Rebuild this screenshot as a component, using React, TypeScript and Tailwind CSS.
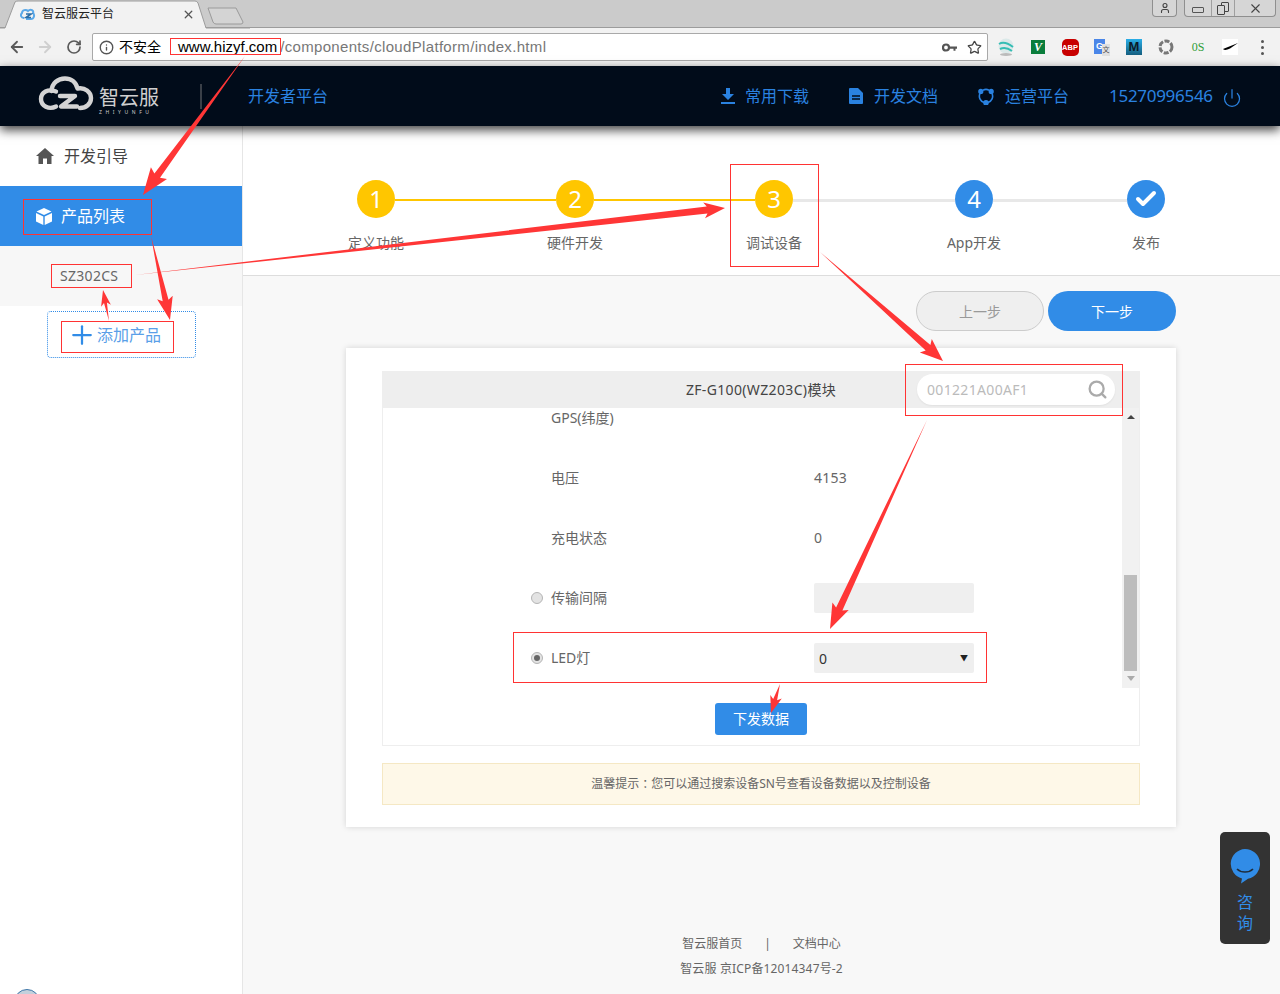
import React from "react";
import { ArrowLeft, ArrowRight, RotateCw, Info, Star, Plus, Search, Power, Check, User, X, Minus } from "lucide-react";

const FONT = { fontFamily: '"Noto Sans","Noto Sans CJK SC",sans-serif' };

function Arrow({ x1, y1, x2, y2, w = 5, head = 9, headLen = 22 }: { x1: number; y1: number; x2: number; y2: number; w?: number; head?: number; headLen?: number }) {
  const dx = x2 - x1, dy = y2 - y1, L = Math.hypot(dx, dy);
  const ux = dx / L, uy = dy / L, nx = -uy, ny = ux;
  const bx = x2 - ux * headLen, by = y2 - uy * headLen;
  const p = (x: number, y: number) => `${x.toFixed(1)},${y.toFixed(1)}`;
  const pts = [
    p(x1, y1),
    p(bx + (nx * w) / 2, by + (ny * w) / 2),
    p(bx + nx * head - ux * 3, by + ny * head - uy * 3),
    p(x2, y2),
    p(bx - nx * head - ux * 3, by - ny * head - uy * 3),
    p(bx - (nx * w) / 2, by - (ny * w) / 2),
  ].join(" ");
  return <polygon points={pts} fill="#ff3636" />;
}

function RedBox({ cls }: { cls: string }) {
  return <div className={`absolute z-20 border border-[#f33] pointer-events-none ${cls}`} />;
}

function Logo() {
  return (
    <svg className="-mt-[2px] block" width="56" height="38" viewBox="0 0 56 38" fill="none" stroke="#d4d4d4" strokeWidth="4.4" strokeLinecap="round" strokeLinejoin="round">
      <path d="M13.5 15 C14 7 20 2.5 27 2.5 C33 2.5 38 6 39.5 12.5 C47 11 53 16 53 22 C53 28 48 32 42 32" />
      <path d="M18 15.5 C10 12.5 3 16 3 23 C3 30 11 34 18 30.5" />
      <path d="M22 20 H37 L23 30.5 H39" />
    </svg>
  );
}

function Ext({ children }: { children: React.ReactNode }) {
  return <div className="w-[32px] flex items-center justify-center">{children}</div>;
}

function Toolbar() {
  return (
    <div className="h-[38px] bg-[#f2f2f2] flex items-center">
      <div className="w-[92px] flex items-center pl-[8px] gap-[10px]">
        <ArrowLeft size={18} strokeWidth={2.4} color="#5a5a5a" />
        <ArrowRight size={18} strokeWidth={2.4} color="#cfcfcf" />
        <RotateCw size={16} strokeWidth={2.6} color="#5a5a5a" className="ml-[2px]" />
      </div>
      <div className="w-[896px] h-[28px] bg-white border border-[#a9a9a9] rounded-[2px] flex items-center pl-[6px] pr-[5px] text-[15px]" style={{ fontFamily: '"Liberation Sans","Noto Sans CJK SC",sans-serif' }}>
        <Info size={15} strokeWidth={2.2} color="#555" />
        <span className="ml-[5px] text-[14px] text-black w-[59px]">不安全</span>
        <span className="text-black">www.hizyf.com</span>
        <span className="text-[#777] ml-[3px] tracking-[0.33px]">/components/cloudPlatform/index.html</span>
        <svg className="ml-auto mr-[10px]" width="15" height="9" viewBox="0 0 15 9"><circle cx="4" cy="4.5" r="3" fill="none" stroke="#555" strokeWidth="2.2" /><path d="M7 3.5h8v2.2h-1.5v2h-2v-2H7z" fill="#555" /></svg>
        <Star size={15} strokeWidth={2} color="#444" />
      </div>
      <div className="flex items-center ml-[2px]">
        <Ext><svg width="16" height="18" viewBox="0 0 16 18"><circle cx="8" cy="8" r="7.5" fill="#dbe9e9" /><path d="M1 6c5-3 10 0 14 3M2 11c4-2 8-1 12 2" stroke="#35bdb4" strokeWidth="2" fill="none" /><ellipse cx="8" cy="16.5" rx="6" ry="1.5" fill="#bbb" /></svg></Ext>
        <Ext><div className="w-[14px] h-[14px] bg-[#0a7d3c] text-white text-[12px] font-bold italic leading-[14px] text-center" style={{ fontFamily: '"Liberation Serif",serif' }}>V</div></Ext>
        <Ext><div className="w-[17px] h-[17px] rounded-[5px] bg-[#c80000] text-white text-[7.5px] font-bold leading-[17px] text-center" style={{ fontFamily: '"Liberation Sans",sans-serif' }}>ABP</div></Ext>
        <Ext><div className="relative w-[16px] h-[17px]"><div className="w-[11px] h-[15px] bg-[#4a86e8] text-white text-[9px] font-bold leading-[14px] text-center" style={{ fontFamily: '"Liberation Sans",sans-serif' }}>G</div><div className="absolute right-0 bottom-0 w-[8px] h-[12px] bg-[#e0e0e0] text-[#555] text-[7px] leading-[12px] text-center">文</div></div></Ext>
        <Ext><div className="w-[16px] h-[16px] bg-gradient-to-b from-[#2aaee8] to-[#155f80] text-[#0b1b2a] text-[13px] font-bold leading-[16px] text-center" style={{ fontFamily: '"Liberation Sans",sans-serif' }}>M</div></Ext>
        <Ext><svg width="16" height="16" viewBox="0 0 16 16" fill="none"><circle cx="8" cy="8" r="6" stroke="#777" strokeWidth="3" strokeDasharray="5 1.5" /></svg></Ext>
        <Ext><span className="text-[#2f9e3a] text-[12px] leading-[16px]" style={{ fontFamily: '"Liberation Serif",serif' }}>0S</span></Ext>
        <Ext><div className="w-[16px] h-[16px] bg-white flex items-center justify-center"><svg width="15" height="8" viewBox="0 0 15 8"><path d="M0 6 L15 0 L7 5.5 Q2 8 0 6z" fill="#000" /></svg></div></Ext>
        <Ext><div className="flex flex-col gap-[3px]"><i className="block w-[3px] h-[3px] rounded-full bg-[#555]" /><i className="block w-[3px] h-[3px] rounded-full bg-[#555]" /><i className="block w-[3px] h-[3px] rounded-full bg-[#555]" /></div></Ext>
      </div>
    </div>
  );
}

function TabStrip() {
  return (
    <div className="h-[28px] bg-[#cbcbcb] flex items-start relative border-b border-[#9c9c9c]">
      <svg className="absolute left-0 top-0" width="250" height="29" viewBox="0 0 250 29">
        <path d="M0 28 L5 28 L15 2 Q16 1 18 1 L195 1 Q197 1 198 3 L206 28 L250 28" fill="#f2f2f2" stroke="#9c9c9c" />
        <path d="M208 8 L236 8 L243 22 Q243 24 241 24 L216 24 Q214 24 213 22 Z" fill="#d4d4d4" stroke="#9a9a9a" />
      </svg>
      <div className="relative flex items-center h-[28px] ml-[20px] w-[175px] text-[12px] text-[#222]" style={FONT}>
        <svg width="16" height="14" viewBox="0 0 16 14" fill="none" stroke="#5aa8e8" strokeWidth="2"><path d="M4 11C1 11 0 8 2 6 2 3 6 2 8 4 11 1 14 4 13 6 15 8 14 12 11 12H6" /><path d="M6 7h5L6 10.5h5" stroke="#2a6ea8" strokeWidth="1.6" /></svg>
        <span className="ml-[6px]">智云服云平台</span>
        <X size={13} strokeWidth={2.4} color="#555" className="ml-auto" />
      </div>
      <div className="absolute left-[1152px] top-0 w-[25px] h-[17px] bg-[#d6d6d6] border border-t-0 border-[#8f8f8f] rounded-b-[4px] flex items-center justify-center"><User size={12} strokeWidth={2.2} color="#444" /></div>
      <div className="absolute left-[1184px] top-0 w-[92px] h-[17px] bg-[#d6d6d6] border border-t-0 border-[#8f8f8f] rounded-b-[4px] flex items-center text-[#444]">
        <div className="w-[26px] flex justify-center"><div className="w-[12px] h-[6px] mt-[3px] border border-[#555] rounded-[1px]" /></div>
        <div className="w-[24px] h-full border-x border-[#9f9f9f] flex items-center justify-center">
          <div className="relative w-[12px] h-[13px]">
            <div className="absolute right-0 top-0 w-[8px] h-[10px] border border-[#444] rounded-[1px]" />
            <div className="absolute left-0 bottom-0 w-[8px] h-[10px] border border-[#444] rounded-[1px] bg-[#d6d6d6]" />
          </div>
        </div>
        <div className="flex-1 flex justify-center"><X size={15} strokeWidth={1.8} /></div>
      </div>
    </div>
  );
}

function NavItem({ icon, label, cls }: { icon: React.ReactNode; label: string; cls: string }) {
  return (
    <div className={`flex items-center ${cls}`}>
      {icon}
      <span>{label}</span>
    </div>
  );
}

function Header() {
  return (
    <div className="relative z-10 h-[60px] bg-[#010c1a] flex items-center text-[16px] text-[#2a82e0] shadow-[0_4px_10px_rgba(0,0,0,0.75)]">
      <div className="ml-[38px] w-[56px]"><Logo /></div>
      <div className="ml-[5px] pt-[10px] flex flex-col items-start w-[61px]">
        <span className="text-[20px] leading-[21px] text-[#cfcfcf]">智云服</span>
        <span className="mt-[1px] text-[5px] leading-[6px] tracking-[3.6px] text-[#cfcfcf]">ZHIYUNFU</span>
      </div>
      <div className="ml-[40px] w-[2px] h-[25px] bg-[#3a4048]" />
      <span className="ml-[46px]">开发者平台</span>
      <NavItem cls="ml-[393px]" label="常用下载" icon={<svg className="mr-[10px]" width="14" height="16" viewBox="0 0 14 16" fill="#2a82e0"><path d="M5 0h4v6h4L7 12 1 6h4z" /><rect x="0" y="14" width="14" height="2" /></svg>} />
      <NavItem cls="ml-[40px]" label="开发文档" icon={<svg className="mr-[11px]" width="14" height="16" viewBox="0 0 14 16"><path d="M1 0h8l5 5v10a1 1 0 0 1-1 1H1a1 1 0 0 1-1-1V1a1 1 0 0 1 1-1z" fill="#2a82e0" /><path d="M3 8h8M3 11h8" stroke="#010c1a" strokeWidth="1.6" /></svg>} />
      <NavItem cls="ml-[40px]" label="运营平台" icon={<svg className="mr-[11px]" width="16" height="17" viewBox="0 0 16 17" fill="none" stroke="#2a82e0" strokeWidth="1.6"><path d="M2 5.5a6.5 6.5 0 0 0 4 9M14 5.5a6.5 6.5 0 0 1-4 9M5 2.2a6.5 6.5 0 0 1 6 0" /><circle cx="2.8" cy="3.4" r="1.8" fill="#2a82e0" /><circle cx="13.2" cy="3.4" r="1.8" fill="#2a82e0" /><circle cx="8" cy="14.8" r="2" fill="#2a82e0" /></svg>} />
      <span className="ml-[40px] text-[17px] tracking-[-0.3px]">15270996546</span>
      <Power size={20} strokeWidth={1.5} className="ml-[9px] mt-[3px]" />
    </div>
  );
}

function Sidebar() {
  return (
    <div className="w-[243px] shrink-0 bg-white border-r border-[#e6e6e6] text-[16px]">
      <div className="h-[60px] flex items-center pl-[36px] text-[#444]">
        <svg width="18" height="16" viewBox="0 0 18 16" fill="#555"><path d="M9 0 L18 8 L15.5 8 L15.5 16 L11 16 L11 10.5 L7 10.5 L7 16 L2.5 16 L2.5 8 L0 8 Z" /></svg>
        <span className="ml-[10px]">开发引导</span>
      </div>
      <div className="h-[60px] flex items-center pl-[36px] bg-[#318ce7] text-white">
        <svg width="16" height="17" viewBox="0 0 16 17" fill="#fff"><path d="M8 0 L15.5 3.5 L8 7 L0.5 3.5Z" /><path d="M0 5 L7.3 8.4 V17 L0 13.5Z" /><path d="M16 5 L8.7 8.4 V17 L16 13.5Z" /></svg>
        <span className="ml-[9px]">产品列表</span>
      </div>
      <div className="h-[60px] flex items-center pl-[60px] pb-[2px] bg-[#f7f7f7] text-[14px] text-[#666] tracking-[0.3px]">SZ302CS</div>
      <div className="ml-[47px] mt-[5px] w-[149px] h-[47px] border border-dotted border-[#318ce7] rounded-[4px] flex items-center pl-[19px] text-[#5a9fe8]">
        <Plus size={30} strokeWidth={1.8} color="#318ce7" />
        <span>添加产品</span>
      </div>
    </div>
  );
}

function Circle({ bg, children }: { bg: string; children: React.ReactNode }) {
  return <div className={`w-[38px] h-[38px] shrink-0 rounded-full flex items-center justify-center text-white text-[24px] ${bg}`}>{children}</div>;
}

function Steps() {
  return (
    <div className="h-[150px] bg-white border-b border-[#ddd]">
      <div className="pt-[54px] pl-[114px] flex items-center">
        <Circle bg="bg-[#ffc600]">1</Circle>
        <div className="w-[161px] h-[2px] mt-[1px] bg-[#ffc600]" />
        <Circle bg="bg-[#ffc600]">2</Circle>
        <div className="w-[161px] h-[2px] mt-[1px] bg-[#ffc600]" />
        <Circle bg="bg-[#ffc600]">3</Circle>
        <div className="w-[162px] h-[3px] mt-[2px] bg-[#e8e8e8]" />
        <Circle bg="bg-[#318ce7]">4</Circle>
        <div className="w-[134px] h-[3px] mt-[2px] bg-[#e8e8e8]" />
        <Circle bg="bg-[#318ce7]"><Check size={24} strokeWidth={4} /></Circle>
      </div>
      <div className="flex mt-[15px] pl-[93px] text-[14px] leading-[20px] text-[#666]">
        <span className="w-[80px] text-center">定义功能</span>
        <span className="w-[80px] ml-[119px] text-center">硬件开发</span>
        <span className="w-[80px] ml-[119px] text-center">调试设备</span>
        <span className="w-[80px] ml-[120px] text-center">App开发</span>
        <span className="w-[80px] ml-[92px] text-center">发布</span>
      </div>
    </div>
  );
}

function Row({ radio, label, children }: { radio?: "off" | "on"; label: string; children?: React.ReactNode }) {
  return (
    <div className="h-[60px] flex items-center pl-[148px] text-[14px] text-[#666]">
      <div className="w-[20px]">
        {radio && (
          <div className="w-[12px] h-[12px] rounded-full bg-[#e3e3e3] border border-[#b5b5b5] flex items-center justify-center">
            {radio === "on" && <div className="w-[6px] h-[6px] rounded-full bg-[#666]" />}
          </div>
        )}
      </div>
      <div className="w-[263px] pb-[2px]">{label}</div>
      {children}
    </div>
  );
}

function Card() {
  return (
    <div className="ml-[103px] mt-[17px] w-[830px] h-[479px] bg-white shadow-[0_0_6px_rgba(0,0,0,0.15)] pt-[23px] px-[36px]">
      <div className="border border-t-0 border-[#eee] h-[375px] flex flex-col">
        <div className="h-[37px] shrink-0 bg-[#eee] grid grid-cols-[1fr_auto_1fr] items-center">
          <div />
          <div className="text-[14px] text-[#444] tracking-[0.35px]">ZF-G100(WZ203C)模块</div>
          <div className="justify-self-end mr-[24px] w-[198px] h-[31px] bg-white rounded-full flex items-center pl-[10px] pr-[7px] text-[14px] text-[#bbb] tracking-[0.33px] shadow-[0_1px_2px_rgba(0,0,0,0.06)]">
            001221A00AF1
            <Search size={21} strokeWidth={2.6} color="#aaa" className="ml-auto" />
          </div>
        </div>
        <div className="h-[280px] shrink-0 flex overflow-hidden">
          <div className="flex-1 overflow-hidden">
            <div className="-mt-[20px]">
              <Row label="GPS(纬度)" />
              <Row label="电压"><span className="pb-[2px] tracking-[0.25px]">4153</span></Row>
              <Row label="充电状态"><span className="pb-[2px]">0</span></Row>
              <Row radio="off" label="传输间隔"><div className="w-[160px] h-[30px] bg-[#efefef] rounded-[2px]" /></Row>
              <Row radio="on" label="LED灯">
                <div className="w-[160px] h-[30px] bg-[#efefef] rounded-[2px] flex items-center justify-between pl-[5px] pr-[6px] text-[#333]">
                  <span>0</span><span className="text-[8px] text-[#222]">▼</span>
                </div>
              </Row>
            </div>
          </div>
          <div className="w-[17px] shrink-0 bg-[#f1f1f1] flex flex-col items-center">
            <div className="mt-[7px] w-0 h-0 border-x-[4px] border-x-transparent border-b-[4px] border-b-[#444]" />
            <div className="mt-[156px] w-[13px] h-[96px] bg-[#bdbdbd]" />
            <div className="mt-[5px] w-0 h-0 border-x-[4px] border-x-transparent border-t-[5px] border-t-[#aaa]" />
          </div>
        </div>
        <div className="flex justify-center mt-[15px]">
          <button className="w-[92px] h-[32px] pb-[2px] bg-[#318ce7] text-white text-[14px] rounded-[3px]">下发数据</button>
        </div>
      </div>
      <div className="mt-[17px] h-[42px] bg-[#fef8e8] border border-[#f5e8c4] flex items-center justify-center text-[12px] text-[#666]">
        温馨提示<span style={{ fontFamily: '"Noto Sans CJK TC",sans-serif' }}>：</span>您可以通过搜索设备SN号查看设备数据以及控制设备
      </div>
    </div>
  );
}

export default function App() {
  return (
    <div className="relative w-[1280px] h-[994px] overflow-hidden bg-[#f8f8f8]" style={FONT}>
      <TabStrip />
      <Toolbar />
      <Header />
      <div className="flex h-[868px]">
        <Sidebar />
        <div className="flex-1 bg-[#f8f8f8]">
          <Steps />
          <div className="flex justify-end gap-[4px] pr-[104px] mt-[15px] text-[14px]">
            <button className="w-[128px] h-[40px] rounded-full bg-[#efefef] border border-[#ccc] text-[#999]">上一步</button>
            <button className="w-[128px] h-[40px] rounded-full bg-[#318ce7] text-white">下一步</button>
          </div>
          <Card />
          <div className="mt-[104px] flex flex-col items-center text-[12px] text-[#666] leading-[25px]">
            <div className="flex">
              <span>智云服首页</span>
              <span className="mx-[22px]">|</span>
              <span>文档中心</span>
            </div>
            <div className="tracking-[0.15px]">智云服 京ICP备12014347号-2</div>
          </div>
        </div>
      </div>

      <div className="absolute left-[1220px] top-[832px] w-[50px] h-[112px] bg-[#333] rounded-[5px] flex flex-col items-center pt-[17px] text-[#318ce7] text-[16px] leading-[21px]">
        <svg width="30" height="35" viewBox="0 0 30 35"><path d="M15 0a15 15 0 0 1 3 29.7L11 34.5l1-5A15 15 0 0 1 15 0z" fill="#318ce7" /><path d="M7 20c4 4 12 4 16 0" stroke="#1f2d3d" strokeWidth="1.6" fill="none" /></svg>
        <span className="mt-[8px]">咨</span>
        <span>询</span>
      </div>

      <div className="absolute left-[14px] top-[989px] w-[26px] h-[26px] rounded-full bg-[#c3d0dc] border border-[#3f77a8]" />

      <RedBox cls="left-[170px] top-[38px] w-[111px] h-[17px]" />
      <RedBox cls="left-[23px] top-[199px] w-[129px] h-[36px]" />
      <RedBox cls="left-[51px] top-[264px] w-[81px] h-[24px]" />
      <RedBox cls="left-[61px] top-[321px] w-[113px] h-[32px]" />
      <RedBox cls="left-[730px] top-[164px] w-[89px] h-[103px]" />
      <RedBox cls="left-[905px] top-[364px] w-[218px] h-[52px]" />
      <RedBox cls="left-[513px] top-[632px] w-[474px] h-[51px]" />

      <svg className="absolute left-0 top-0 z-20 pointer-events-none" width="1280" height="994">
        <Arrow x1={245} y1={56} x2={143} y2={195} w={7} head={10} headLen={24} />
        <Arrow x1={135} y1={275} x2={725} y2={208} w={7} head={8} headLen={18} />
        <Arrow x1={151} y1={236} x2={170} y2={320} w={6} head={8} headLen={20} />
        <Arrow x1={109} y1={321} x2={103} y2={290} w={3} head={5} headLen={13} />
        <Arrow x1={820} y1={252} x2={943} y2={361} w={7} head={9} headLen={20} />
        <Arrow x1={927} y1={420} x2={830} y2={629} w={7} head={9} headLen={22} />
        <Arrow x1={780} y1={684} x2={771} y2={713} w={4} head={6} headLen={14} />
      </svg>
    </div>
  );
}
